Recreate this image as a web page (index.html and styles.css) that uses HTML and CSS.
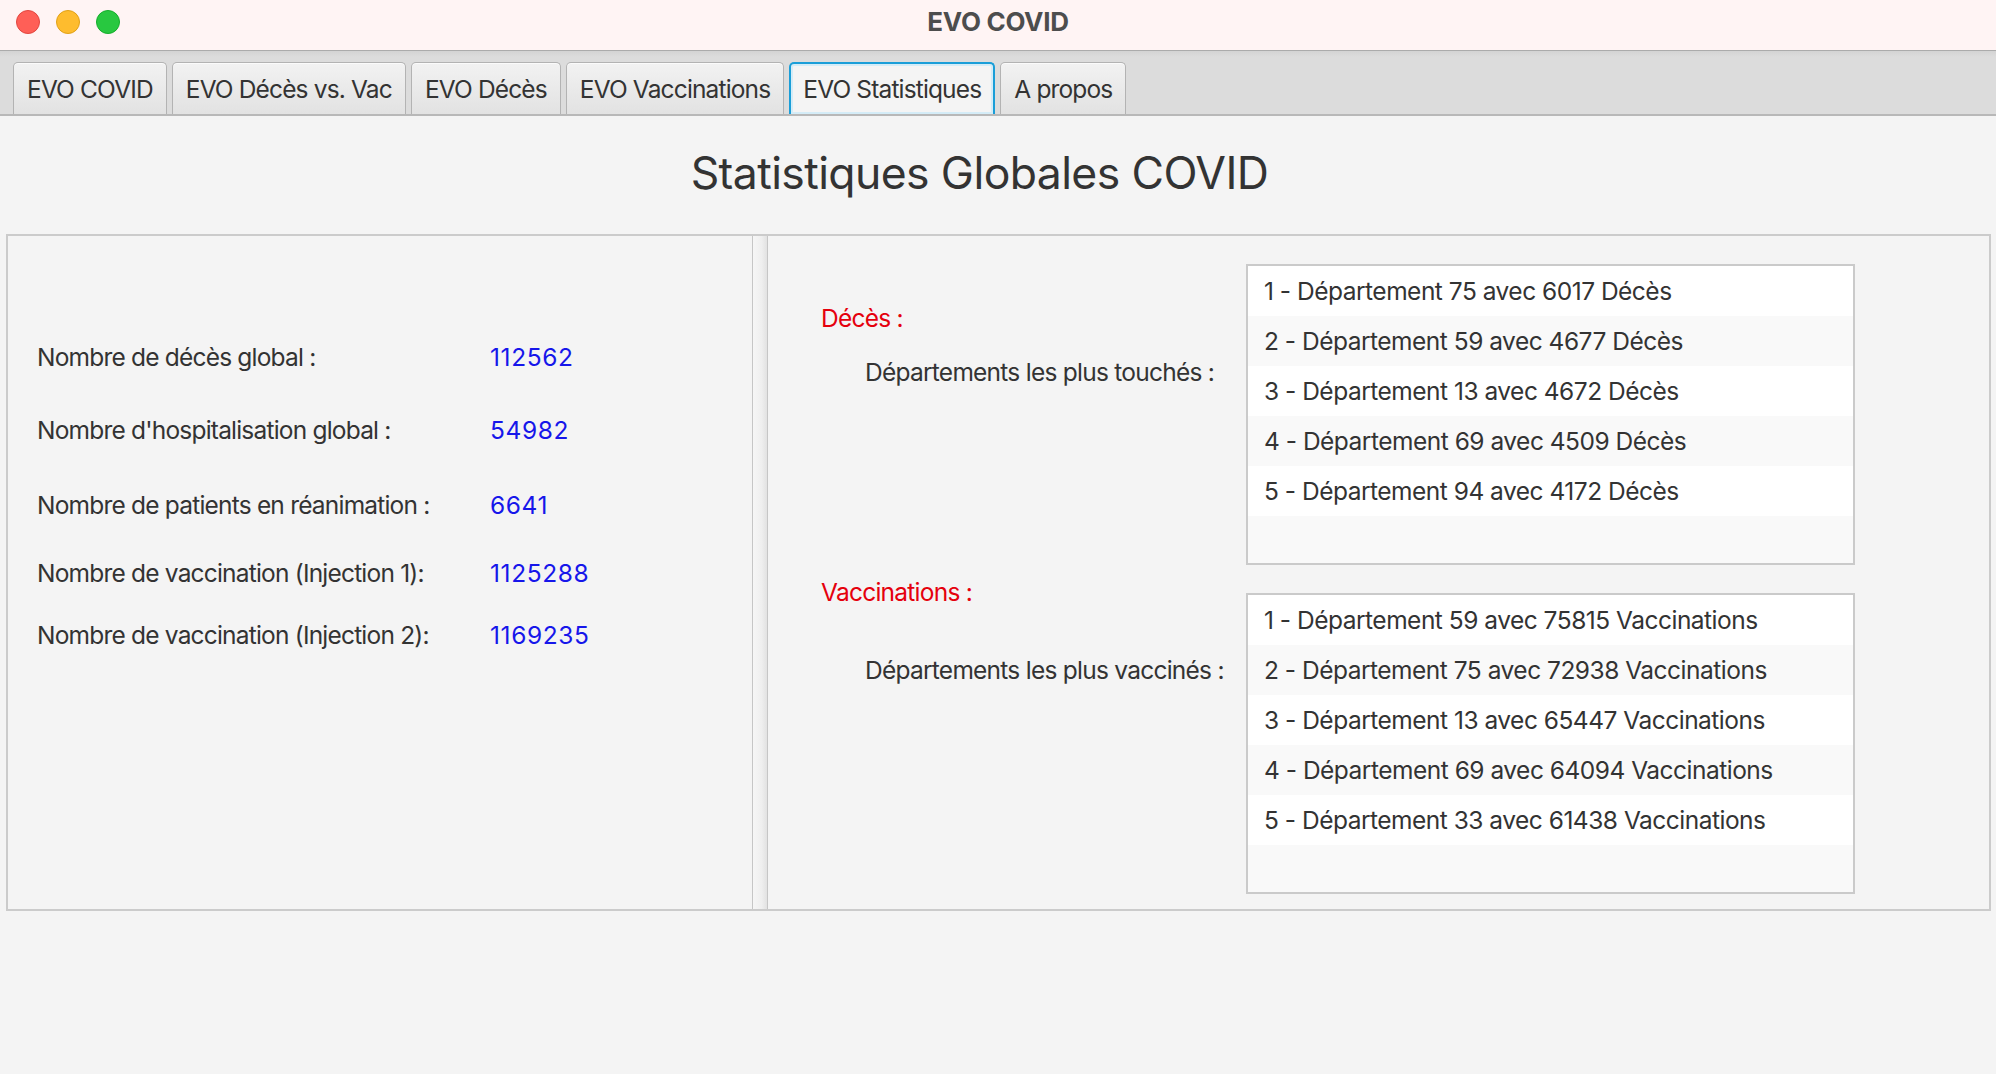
FILE: index.html
```html
<!DOCTYPE html>
<html lang="fr">
<head>
<meta charset="utf-8">
<title>EVO COVID</title>
<link rel="stylesheet" href="styles.css">
</head>
<body>
<div class="window">
  <header class="titlebar">
    <div class="lights">
      <span class="light light-red"></span>
      <span class="light light-yellow"></span>
      <span class="light light-green"></span>
    </div>
    <div class="title">EVO COVID</div>
  </header>

  <nav class="tabbar">
    <div class="tab">EVO COVID</div>
    <div class="tab">EVO Décès vs. Vac</div>
    <div class="tab">EVO Décès</div>
    <div class="tab">EVO Vaccinations</div>
    <div class="tab tab-selected">EVO Statistiques</div>
    <div class="tab">A propos</div>
  </nav>

  <main class="content">
    <h1 class="heading">Statistiques Globales COVID</h1>

    <section class="split">
      <div class="pane-left">
        <div class="stats">
          <div class="stat-label">Nombre de décès global :</div>
          <div class="stat-value">112562</div>
          <div class="stat-label">Nombre d'hospitalisation global :</div>
          <div class="stat-value">54982</div>
          <div class="stat-label">Nombre de patients en réanimation :</div>
          <div class="stat-value">6641</div>
          <div class="stat-label">Nombre de vaccination (Injection 1):</div>
          <div class="stat-value">1125288</div>
          <div class="stat-label">Nombre de vaccination (Injection 2):</div>
          <div class="stat-value">1169235</div>
        </div>
      </div>

      <div class="divider"></div>

      <div class="pane-right">
        <div class="group group-deces">
          <div class="group-labels">
            <div class="group-title">Décès :</div>
            <div class="group-sub">Départements les plus touchés :</div>
          </div>
          <ul class="listbox">
            <li class="row">1 - Département 75 avec 6017 Décès</li>
            <li class="row">2 - Département 59 avec 4677 Décès</li>
            <li class="row">3 - Département 13 avec 4672 Décès</li>
            <li class="row">4 - Département 69 avec 4509 Décès</li>
            <li class="row">5 - Département 94 avec 4172 Décès</li>
            <li class="row row-empty"></li>
          </ul>
        </div>

        <div class="group group-vacc">
          <div class="group-labels">
            <div class="group-title">Vaccinations :</div>
            <div class="group-sub">Départements les plus vaccinés :</div>
          </div>
          <ul class="listbox">
            <li class="row">1 - Département 59 avec 75815 Vaccinations</li>
            <li class="row">2 - Département 75 avec 72938 Vaccinations</li>
            <li class="row">3 - Département 13 avec 65447 Vaccinations</li>
            <li class="row">4 - Département 69 avec 64094 Vaccinations</li>
            <li class="row">5 - Département 33 avec 61438 Vaccinations</li>
            <li class="row row-empty"></li>
          </ul>
        </div>
      </div>
    </section>
  </main>
</div>
</body>
</html>
```

FILE: styles.css
```css
* { box-sizing: border-box; }

html, body {
  margin: 0;
  padding: 0;
  width: 1996px;
  height: 1074px;
  overflow: hidden;
  background: #f4f4f4;
  font-family: "Inter", "Liberation Sans", sans-serif;
  color: #333333;
}

.window {
  width: 1996px;
  height: 1074px;
  background: #f4f4f4;
}

/* ---------- title bar ---------- */
.titlebar {
  position: relative;
  height: 50px;
  background: #fff4f4;
  display: flex;
  align-items: center;
  justify-content: center;
  padding-bottom: 8px;
}

.lights {
  position: absolute;
  left: 16px;
  top: 10px;
  display: flex;
  gap: 16px;
}

.light {
  width: 24px;
  height: 24px;
  border-radius: 50%;
  display: block;
}
.light-red { background: #ff5f57; border: 1px solid #e2463f; }
.light-yellow { background: #febc2e; border: 1px solid #e1a116; }
.light-green { background: #28c840; border: 1px solid #14ae2b; }

.title {
  font-weight: 700;
  font-size: 26px;
  color: #4d4d4d;
  letter-spacing: -0.3px;
}

/* ---------- tabs ---------- */
.tabbar {
  height: 66px;
  border-top: 1px solid #ababab;
  border-bottom: 2px solid #b8b8b8;
  background: linear-gradient(to bottom, #d3d3d3 0px, #dcdcdc 6px, #dcdcdc 100%);
  display: flex;
  align-items: flex-end;
  gap: 5px;
  padding-left: 13px;
}

.tab {
  height: 52px;
  padding: 0 13px;
  border: 1px solid #b3b3b3;
  border-bottom: none;
  border-radius: 5px 5px 0 0;
  background: linear-gradient(to bottom, #f2f2f2, #e2e2e2);
  box-shadow: inset 0 1px 0 #fbfbfb;
  display: flex;
  align-items: center;
  font-size: 24.5px;
  letter-spacing: -0.85px;
  color: #333333;
  white-space: nowrap;
}

.tab-selected {
  border: 2px solid #1a9ed8;
  border-bottom: none;
  padding: 0 12px;
  background: #f4f4f4;
  box-shadow: inset 0 0 0 2px #d4ecf7;
}

/* ---------- content ---------- */
.content {
  padding: 0 5px 0 6px;
}

.heading {
  margin: 0;
  padding: 27px 38px 31px 0;
  line-height: 60px;
  font-size: 44.5px;
  font-weight: 400;
  letter-spacing: -0.6px;
  text-align: center;
  color: #333333;
}

.split {
  height: 677px;
  border: 2px solid #cbcbcb;
  display: flex;
}

.pane-left {
  width: 744px;
  padding: 101px 0 0 29px;
}

.stats {
  display: grid;
  grid-template-columns: 453px auto;
  grid-template-rows: 73px 75px 68px 62px 40px;
  font-size: 24.5px;
  letter-spacing: -0.8px;
  line-height: 40px;
}

.stat-label {
  align-self: start;
  color: #333333;
  white-space: nowrap;
}

.stat-value {
  align-self: start;
  color: #1616ea;
  letter-spacing: 0.6px;
}

.divider {
  width: 16px;
  border-left: 1px solid #c6c6c6;
  border-right: 1px solid #c6c6c6;
  background: linear-gradient(to right, #f6f6f6 0%, #efefef 60%, #e2e2e2 100%);
}

.pane-right {
  flex: 1;
  padding: 28px 0 0 53px;
  font-size: 24.5px;
  letter-spacing: -0.75px;
}

.group {
  display: flex;
  align-items: flex-start;
}

.group-labels {
  width: 425px;
  line-height: 40px;
}

.group-title {
  color: #e5000d;
}

.group-sub {
  margin-left: 44px;
  white-space: nowrap;
}

.group-deces .group-labels { padding-top: 34px; }
.group-deces .group-sub { margin-top: 14px; }

.group-vacc { margin-top: 7px; }
.group-vacc .listbox { margin-top: 21px; }
.group-vacc .group-sub { margin-top: 38px; }

.listbox {
  list-style: none;
  margin: 0;
  padding: 0;
  width: 609px;
  height: 301px;
  border: 2px solid #cacaca;
  background: #f9f9f9;
  overflow: hidden;
}

.row {
  height: 50px;
  line-height: 50px;
  padding-left: 16px;
  background: #ffffff;
  color: #333333;
  letter-spacing: -0.5px;
  white-space: nowrap;
}

.row:nth-child(even) {
  background: #f9f9f9;
}
```
